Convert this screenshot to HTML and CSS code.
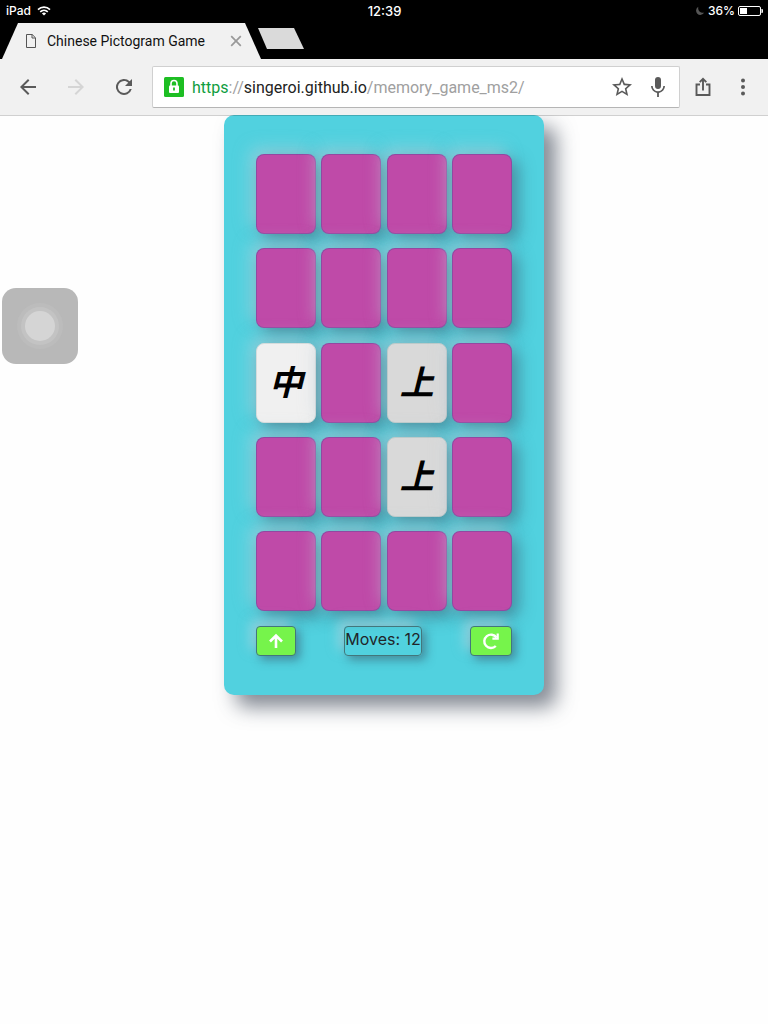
FILE: index.html
```html
<!DOCTYPE html>
<html lang="en">
<head>
<meta charset="utf-8">
<meta name="viewport" content="width=device-width, initial-scale=1">
<title>Chinese Pictogram Game</title>
<link rel="stylesheet" href="styles.css">
</head>
<body>
<header class="browser">
  <div class="status">
    <div class="status-side">
      <span>iPad</span>
      <svg width="14" height="10" viewBox="0 0 14 10" fill="none" stroke="#fff" stroke-width="1.6"><path d="M1 3.6a8.6 8.6 0 0 1 12 0M3.2 5.9a5.5 5.5 0 0 1 7.6 0"/><path d="M7 9.6 4.9 7.5a3 3 0 0 1 4.2 0z" fill="#fff" stroke="none"/></svg>
    </div>
    <time>12:39</time>
    <div class="status-side status-end">
      <svg width="10" height="10" viewBox="0 0 10 10"><path d="M3.4.8A4.3 4.3 0 1 0 9.2 6.600 4.600 4.600 0 0 1 3.400.8z" fill="#555"/></svg>
      <span class="battery-text">36%</span>
      <svg width="25" height="10" viewBox="0 0 25 10"><rect x=".5" y=".5" width="22" height="9" rx="1.500" fill="none" stroke="#fff"/><rect x="2" y="2" width="7" height="6" fill="#fff"/><path d="M24 3.200q1 1.800 0 3.600z" stroke="#fff" fill="#fff"/></svg>
    </div>
  </div>
  <div class="tabs">
    <div class="tab">
      <svg width="10" height="14" viewBox="0 0 10 14" fill="none" stroke="#555"><path d="M.5.5h5.700l3.300 3.300v9.700h-9zM6 .5V4h3.500"/></svg>
      <span class="tab-title">Chinese Pictogram Game</span>
      <button class="plain" aria-label="Close tab"><svg width="12" height="12" viewBox="0 0 12 12" stroke="#999" stroke-width="1.700"><path d="m1.200 1.200 9.600 9.600m0-9.600-9.600 9.600"/></svg></button>
    </div>
    <button class="new-tab" aria-label="New tab"></button>
  </div>
  <div class="toolbar">
    <button class="plain" aria-label="Back"><svg class="icon" viewBox="0 0 24 24"><path d="M20 11H7.830l5.590-5.590L12 4l-8 8 8 8 1.410-1.410L7.830 13H20z"/></svg></button>
    <button class="plain" aria-label="Forward" disabled><svg class="icon icon-faint" viewBox="0 0 24 24"><path d="M4 11h12.170l-5.590-5.590L12 4l8 8-8 8-1.410-1.410L16.170 13H4z"/></svg></button>
    <button class="plain" aria-label="Reload"><svg class="icon" viewBox="0 0 24 24"><path d="M17.650 6.350A8 8 0 1 0 19.730 14h-2.080A6 6 0 1 1 12 6c1.660 0 3.140.69 4.220 1.780L13 11h7V4z"/></svg></button>
    <div class="omnibox">
      <svg width="20" height="20" viewBox="0 0 20 20"><rect width="20" height="20" rx="1.500" fill="#1dbe23"/><path d="M7 9V6.500a3 3 0 0 1 6 0V9" fill="none" stroke="#fff" stroke-width="1.600"/><rect x="5" y="8.500" width="10" height="7.500" rx="1" fill="#fff"/><path d="M10 10.500v3" stroke="#1dbe23" stroke-width="1.800"/></svg>
      <a class="url" href="https://singeroi.github.io/memory_game_ms2/"><span class="scheme">https</span>://<span class="host">singeroi.github.io</span>/memory_game_ms2/</a>
      <button class="plain" aria-label="Bookmark"><svg class="icon" viewBox="0 0 24 24"><path d="m22 9.240-7.190-.62L12 2 9.190 8.630 2 9.240l5.460 4.730L5.820 21 12 17.270 18.180 21l-1.630-7.030zM12 15.400l-3.760 2.270 1-4.280-3.320-2.880 4.380-.38L12 6.100l1.710 4.040 4.380.38-3.320 2.880 1 4.280z"/></svg></button>
      <button class="plain" aria-label="Voice search"><svg class="icon" viewBox="0 0 24 24"><path d="M12 14a3 3 0 0 0 3-3V5a3 3 0 0 0-6 0v6a3 3 0 0 0 3 3zm5.300-3a5.300 5.300 0 0 1-10.600 0H5a7 7 0 0 0 6.100 6.900V22h1.800v-4.100A7 7 0 0 0 19 11z"/></svg></button>
    </div>
    <button class="plain" aria-label="Share"><svg class="icon" viewBox="0 0 24 24" ><path d="M9 9.500H5.500v10.500h13V9.500H15M12 15.500V4.500M8.700 7.200 12 3.900l3.300 3.300" fill="none" stroke="#5a5a5a" stroke-width="1.900"/></svg></button>
    <button class="plain" aria-label="Menu"><svg class="icon" viewBox="0 0 24 24"><circle cx="12" cy="5.500" r="2"/><circle cx="12" cy="12" r="2"/><circle cx="12" cy="18.500" r="2"/></svg></button>
  </div>
</header>
<button class="assistive" aria-label="Assistive touch"><span class="assistive-dot"></span></button>
<main class="board">
  <div class="cards">
    <button class="card" aria-label="Card 1"></button>
    <button class="card" aria-label="Card 2"></button>
    <button class="card" aria-label="Card 3"></button>
    <button class="card" aria-label="Card 4"></button>
    <button class="card" aria-label="Card 5"></button>
    <button class="card" aria-label="Card 6"></button>
    <button class="card" aria-label="Card 7"></button>
    <button class="card" aria-label="Card 8"></button>
    <button class="card open" lang="zh">中</button>
    <button class="card" aria-label="Card 10"></button>
    <button class="card matched" lang="zh">上</button>
    <button class="card" aria-label="Card 12"></button>
    <button class="card" aria-label="Card 13"></button>
    <button class="card" aria-label="Card 14"></button>
    <button class="card matched" lang="zh">上</button>
    <button class="card" aria-label="Card 16"></button>
    <button class="card" aria-label="Card 17"></button>
    <button class="card" aria-label="Card 18"></button>
    <button class="card" aria-label="Card 19"></button>
    <button class="card" aria-label="Card 20"></button>
  </div>
  <div class="controls">
    <button class="control" aria-label="Back to start"><svg width="16" height="16" viewBox="0 0 16 16" fill="none" stroke="#fff" stroke-width="2.600"><path d="M8 15V2.500M2 8.500l6-6 6 6"/></svg></button>
    <div class="moves">Moves: 12</div>
    <button class="control control-wide" aria-label="Restart"><svg width="18" height="18" viewBox="0 0 18 18"><path d="M13.800 14A6.700 6.700 0 1 1 14.500 5.500" fill="none" stroke="#fff" stroke-width="2.400"/><path d="M16.800 1.500v6.200H10.400V5.600h4.200V1.500z" fill="#fff"/></svg></button>
  </div>
</main>
</body>
</html>
```
FILE: styles.css
```css
* {
  box-sizing: border-box;
}

html {
  background: #fefefe;
}

body {
  min-height: 100vh;
  margin: 0;
  font-family: Roboto, sans-serif;
}

button {
  margin: 0;
  padding: 0;
  font: inherit;
}

svg {
  display: block;
  flex: none;
}

.browser {
  position: relative;
  z-index: 1;
  background: #000;
}

.status {
  display: grid;
  grid-template-columns: 1fr auto 1fr;
  align-items: center;
  height: 22px;
  padding: 0 5px 0 6px;
  color: #fff;
  font: 500 12px/22px Inter, sans-serif;
}

.status-side {
  display: flex;
  align-items: center;
  gap: 6px;
}

.status-end {
  justify-content: flex-end;
  gap: 3px;
}

.status time {
  font-size: 13px;
}

.tabs {
  display: flex;
  height: 37px;
  padding: 1px 0 0 2px;
}

.tab {
  display: flex;
  align-items: center;
  width: 259px;
  padding: 0 19px 0 24px;
  background: #f1f1f1;
  clip-path: polygon(16px 0, 243px 0, 100% 100%, 0 100%);
}

.tab-title {
  flex: 1;
  margin-left: 11px;
  color: #111;
  font-size: 14px;
  white-space: nowrap;
}

.new-tab {
  width: 46px;
  height: 21px;
  margin: 5px 0 0 -3px;
  border: 0;
  background: #dadada;
  clip-path: polygon(0 0, 36px 0, 100% 100%, 9px 100%);
}

.plain {
  border: 0;
  background: none;
}

.toolbar {
  display: flex;
  align-items: center;
  height: 56px;
  padding: 0 13px 0 16px;
  background: #f1f1f1;
  box-shadow: 0 1px rgba(0, 0, 0, 0.18);
}

.toolbar > .plain {
  margin-right: 24px;
}

.toolbar > .plain + .omnibox {
  margin-left: -8px;
}

.toolbar > .omnibox + .plain {
  margin-right: 16px;
}

.toolbar > .plain:last-child {
  margin-right: 0;
}

.icon {
  width: 24px;
  height: 24px;
  fill: #5a5a5a;
}

.icon-faint {
  fill: #d5d5d5;
}

.omnibox {
  display: flex;
  flex: 1;
  align-items: center;
  min-width: 0;
  height: 42px;
  margin-right: 11px;
  padding: 0 9px 0 11px;
  border: 1px solid #d0d0d0;
  border-bottom-color: #b5b5b5;
  border-radius: 2px;
  background: #fff;
}

.url {
  flex: 1;
  min-width: 0;
  margin-left: 8px;
  padding-top: 2px;
  overflow: hidden;
  color: #a0a0a0;
  font-size: 16px;
  line-height: 24px;
  text-decoration: none;
  white-space: nowrap;
}

.scheme {
  color: #0f9d40;
}

.host {
  color: #222;
}

.omnibox .plain + .plain {
  margin-left: 12px;
}

.assistive {
  position: fixed;
  top: 288px;
  left: 2px;
  display: grid;
  place-items: center;
  width: 76px;
  height: 76px;
  border: 0;
  border-radius: 14px;
  background: #b8b8b8;
}

.assistive-dot {
  width: 30px;
  height: 30px;
  border-radius: 50%;
  background: #d5d5d5;
  box-shadow: 0 0 0 4px #c3c3c3, 0 0 0 8px #bcbcbc;
}

.board {
  width: 320px;
  margin: 0 auto;
  padding: 39px 32px;
  border-radius: 10px;
  background: #51d1df;
  box-shadow: 12px 12px 20px rgba(55, 65, 80, 0.62);
}

.cards {
  display: grid;
  grid-template-columns: repeat(4, 60px);
  place-content: space-between;
  min-height: 457px;
}

.card {
  height: 80px;
  padding-bottom: 4px;
  border: 1px solid rgba(80, 70, 150, 0.4);
  border-radius: 8px;
  background: #bf4aa8;
  box-shadow: 6px 6px 16px rgba(50, 75, 95, 0.5), -6px -6px 16px rgba(200, 215, 225, 0.5);
  color: #000;
  font: italic 700 34px/74px "Noto Sans CJK SC", sans-serif;
}

.open {
  border-color: #d5dcdc;
  background: #f0f0f0;
}

.matched {
  border-color: #bccaca;
  background: #d9d9d9;
}

.controls {
  display: flex;
  justify-content: space-between;
  margin-top: 15px;
}

.control,
.moves {
  height: 30px;
  border: 1px solid #42777c;
  border-radius: 4px;
  box-shadow: 4px 4px 10px rgba(50, 75, 95, 0.5), -6px -6px 12px rgba(200, 215, 225, 0.5);
}

.control {
  display: grid;
  place-items: center;
  width: 40px;
  background: #76f44b;
}

.control-wide {
  width: 42px;
}

.moves {
  color: #212529;
  font: 16px/25px Inter, sans-serif;
}
```
